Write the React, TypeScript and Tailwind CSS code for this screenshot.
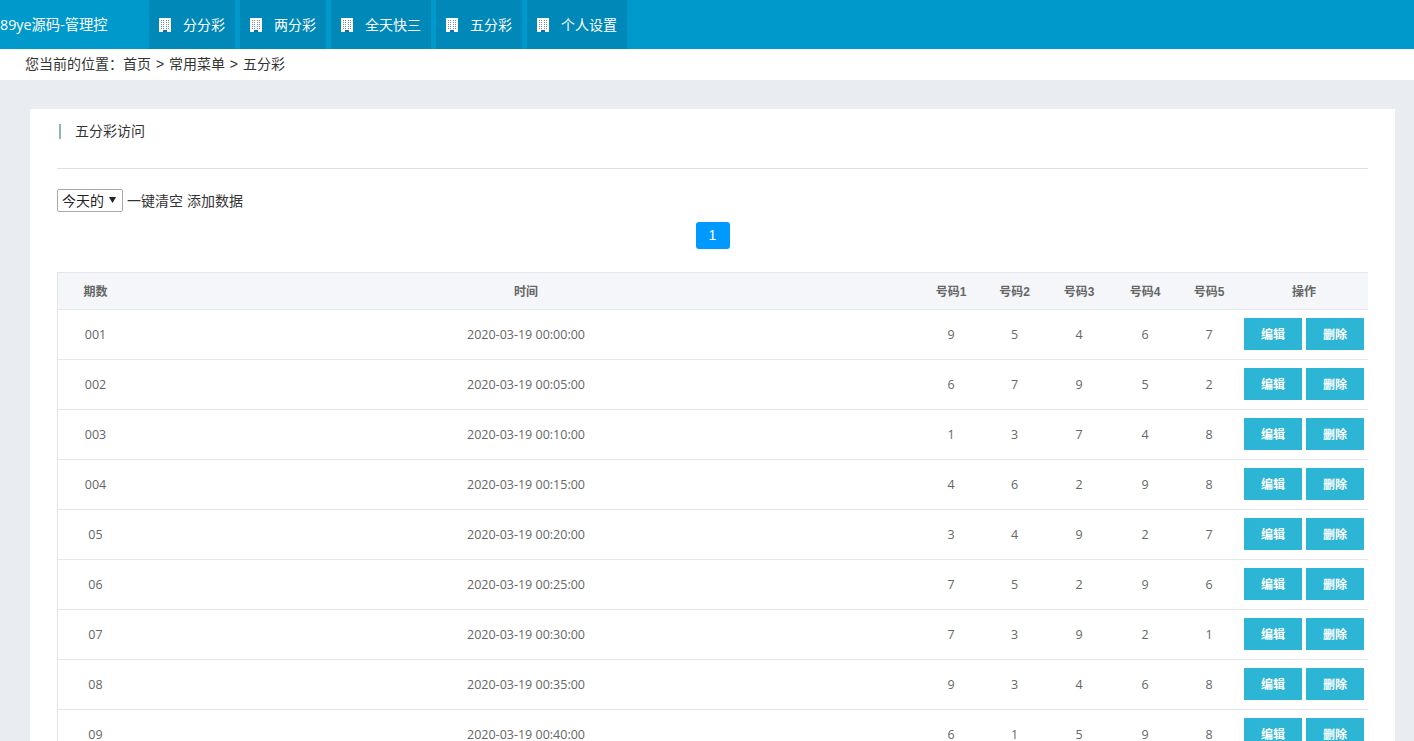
const font = "font-['Liberation_Sans','Noto_Sans_CJK_SC',sans-serif]"
const cell = "border-b border-[#e3e6ea]"

const navItems = ["分分彩", "两分彩", "全天快三", "五分彩", "个人设置"]

const headers = ["期数", "时间", "号码1", "号码2", "号码3", "号码4", "号码5", "操作"]

const rows = [
  ["001", "00:00:00", 9, 5, 4, 6, 7],
  ["002", "00:05:00", 6, 7, 9, 5, 2],
  ["003", "00:10:00", 1, 3, 7, 4, 8],
  ["004", "00:15:00", 4, 6, 2, 9, 8],
  ["05", "00:20:00", 3, 4, 9, 2, 7],
  ["06", "00:25:00", 7, 5, 2, 9, 6],
  ["07", "00:30:00", 7, 3, 9, 2, 1],
  ["08", "00:35:00", 9, 3, 4, 6, 8],
  ["09", "00:40:00", 6, 1, 5, 9, 8],
]

function BuildingIcon() {
  const dots = [2, 4, 6, 8, 10].flatMap(y => [2, 4, 7, 9].map(x => ({ x, y })))
  return (
    <svg width="12" height="14" viewBox="0 0 12 14" className="shrink-0" shapeRendering="crispEdges">
      <rect width="12" height="14" fill="#fff" />
      {dots.map(d => (
        <rect key={`${d.x}-${d.y}`} x={d.x} y={d.y} width="1" height="1" fill="#6f8fae" />
      ))}
      <rect x="4" y="12" width="4" height="2" fill="#0f6fa8" />
    </svg>
  )
}

function ActionButton({ label }: { label: string }) {
  return (
    <button className="w-[58px] h-8 pt-px bg-[#2db5d6] text-white text-xs font-bold">{label}</button>
  )
}

export default function App() {
  return (
    <div className={`h-screen overflow-hidden bg-[#e9ecf1] text-sm ${font}`}>
      <header className="h-[49px] bg-[#0099cc] flex text-white">
        <div className="w-[149px] text-[14.3px] font-['Open_Sans','Noto_Sans_CJK_SC',sans-serif] leading-[49px] shrink-0">89ye源码-管理控</div>
        <nav className="flex gap-[5px]">
          {navItems.map(item => (
            <a key={item} className="h-[49px] px-[10px] flex items-center gap-3 bg-[#0088b8]">
              <BuildingIcon />
              {item}
            </a>
          ))}
        </nav>
      </header>

      <div className="h-[31px] bg-white pl-[25px] leading-[30px] text-[#333] [word-spacing:1px]">
        您当前的位置：首页 &gt; 常用菜单 &gt; 五分彩
      </div>

      <main className="mt-[29px] ml-[30px] w-[1365px] bg-white px-[27px]">
        <div className="h-[60px] border-b border-[#dcdfe3] pt-[15px]">
          <h2 className="ml-[2px] border-l-2 border-[#8fb3c4] pl-[14px] leading-[15px] text-[#333] font-normal">五分彩访问</h2>
        </div>

        <div className="mt-5 flex items-center gap-1 h-[23px] text-[#333]">
          <div className="relative w-[66px] h-[23px]">
            <select className="appearance-none w-full h-full border border-[#a9a9a9] rounded-[2px] pl-1 bg-white text-[#222]">
              <option>今天的</option>
            </select>
            <svg width="7" height="6" viewBox="0 0 7 6" className="absolute left-[52px] top-2 pointer-events-none">
              <path d="M0 0h7L3.5 6z" fill="#222" />
            </svg>
          </div>
          <span>一键清空 添加数据</span>
        </div>

        <div className="mt-[10px] flex justify-center">
          <span className="w-[34px] h-[27px] rounded-[3px] bg-[#0099ff] text-white leading-[27px] text-center">1</span>
        </div>

        <table className="mt-[23px] w-full table-fixed border-separate border-spacing-0 text-[#666]">
          <colgroup>
            <col className="w-[76px]" />
            <col className="w-[786px]" />
            <col className="w-[64px]" />
            <col className="w-[63px]" />
            <col className="w-[66px]" />
            <col className="w-[66px]" />
            <col className="w-[62px]" />
            <col className="w-[128px]" />
          </colgroup>
          <thead>
            <tr className="h-[38px] bg-[#f4f6f9] text-xs">
              {headers.map((h, i) => (
                <th key={h} className={`font-bold pt-0.5 border-y border-[#e3e6ea] ${i === 0 ? "border-l" : ""}`}>{h}</th>
              ))}
            </tr>
          </thead>
          <tbody className="font-['Open_Sans','Noto_Sans_CJK_SC',sans-serif] text-[12.5px]">
            {rows.map(([id, time, ...nums]) => (
              <tr key={id} className="h-[50px] text-center">
                <td className={`${cell} border-l`}>{id}</td>
                <td className={cell}>2020-03-19 {time}</td>
                {nums.map((n, i) => (
                  <td key={i} className={cell}>{n}</td>
                ))}
                <td className={cell}>
                  <div className="flex justify-center gap-1 pb-px">
                    <ActionButton label="编辑" />
                    <ActionButton label="删除" />
                  </div>
                </td>
              </tr>
            ))}
          </tbody>
        </table>
      </main>
    </div>
  )
}
